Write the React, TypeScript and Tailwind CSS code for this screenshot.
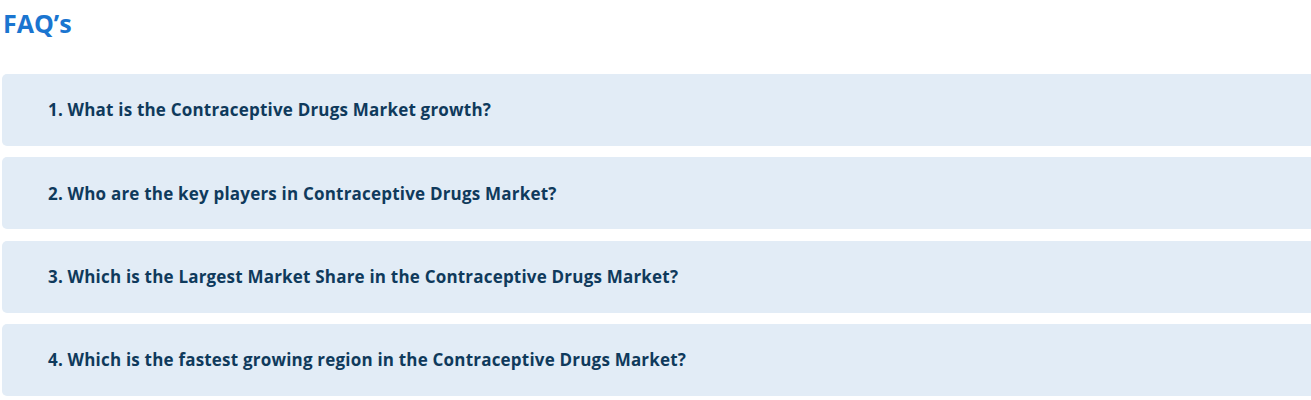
const faqs = [
  "1. What is the Contraceptive Drugs Market growth?",
  "2. Who are the key players in Contraceptive Drugs Market?",
  "3. Which is the Largest Market Share in the Contraceptive Drugs Market?",
  "4. Which is the fastest growing region in the Contraceptive Drugs Market?",
];

export default function App() {
  return (
    <div className="h-[400px] w-full overflow-hidden bg-white font-['Open_Sans','Noto_Sans',sans-serif]">
      <h2 className="pl-[3px] pt-[7px] text-[25px] font-bold leading-[32px] text-[#1a75d0]">
        FAQ’s
      </h2>
      <div className="mt-[35px] flex w-[1330px] flex-col gap-[11.3px] pl-[2px]">
        {faqs.map((q) => (
          <div
            key={q}
            className="flex h-[72px] items-center rounded-[5px] bg-[#e2ecf6] pl-[46px]"
          >
            <span className="text-[17px] font-bold tracking-[0.2px] text-[#0f3a5c]">{q}</span>
          </div>
        ))}
      </div>
    </div>
  );
}
